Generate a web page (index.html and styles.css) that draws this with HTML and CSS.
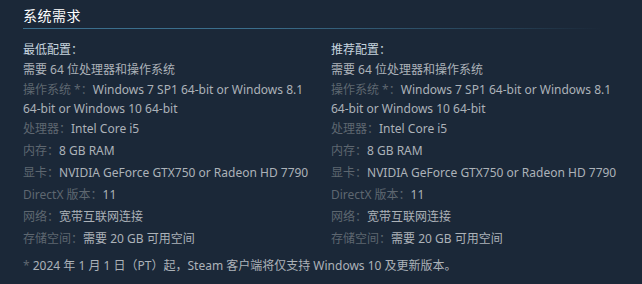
FILE: index.html
```html
<!DOCTYPE html>
<html lang="zh-CN">
<head>
<meta charset="utf-8">
<link rel="stylesheet" href="styles.css">
</head>
<body>
<div class="sysreq">
  <h2 class="title">系统需求</h2>
  <div class="cols">
    <div class="col">
      <ul class="list">
        <li class="head">最低配置：</li>
        <li class="tight">需要 64 位处理器和操作系统</li>
        <li class="tight"><span class="lbl">操作系统 *：</span>Windows 7 SP1 64-bit or Windows 8.1 64-bit or Windows 10 64-bit</li>
        <li><span class="lbl">处理器：</span>Intel Core i5</li>
        <li><span class="lbl">内存：</span>8 GB RAM</li>
        <li><span class="lbl">显卡：</span>NVIDIA GeForce GTX750 or Radeon HD 7790</li>
        <li><span class="lbl">DirectX 版本：</span>11</li>
        <li><span class="lbl">网络：</span>宽带互联网连接</li>
        <li><span class="lbl">存储空间：</span>需要 20 GB 可用空间</li>
      </ul>
    </div>
    <div class="col">
      <ul class="list">
        <li class="head">推荐配置：</li>
        <li class="tight">需要 64 位处理器和操作系统</li>
        <li class="tight"><span class="lbl">操作系统 *：</span>Windows 7 SP1 64-bit or Windows 8.1 64-bit or Windows 10 64-bit</li>
        <li><span class="lbl">处理器：</span>Intel Core i5</li>
        <li><span class="lbl">内存：</span>8 GB RAM</li>
        <li><span class="lbl">显卡：</span>NVIDIA GeForce GTX750 or Radeon HD 7790</li>
        <li><span class="lbl">DirectX 版本：</span>11</li>
        <li><span class="lbl">网络：</span>宽带互联网连接</li>
        <li><span class="lbl">存储空间：</span>需要 20 GB 可用空间</li>
      </ul>
    </div>
  </div>
  <p class="note"><span class="ast">*</span> 2024 年 1 月 1 日（PT）起，Steam 客户端将仅支持 Windows 10 及更新版本。</p>
</div>
</body>
</html>
```
FILE: styles.css
```css
html, body {
  margin: 0;
  padding: 0;
  background: #1b2838;
  height: 100%;
}
body {
  font-family: "Noto Sans", "Noto Sans CJK SC", sans-serif;
  font-size: 12px;
  color: #acb2b8;
}
.sysreq {
  padding: 6px 0 0 23px;
}
.title {
  margin: 0 40px 0 0;
  font-size: 14px;
  font-weight: normal;
  color: #ffffff;
  letter-spacing: 0.5px;
  line-height: 20px;
  padding-bottom: 3px;
  background: linear-gradient(to right, #3b6e8c 0%, #3b6e8c 40%, rgba(59,110,140,0.3) 85%, rgba(59,110,140,0) 100%) no-repeat left bottom / 100% 1px;
}
.cols {
  display: flex;
  gap: 12px;
  margin-top: 11px;
}
.col {
  width: 296px;
}
.list {
  list-style: none;
  margin: 0;
  padding: 0;
}
.list li {
  line-height: 19px;
  margin-bottom: 3px;
}
.list li.head {
  color: #c6d4df;
  margin-bottom: 1px;
}
.list li.tight {
  margin-bottom: 1px;
}
.lbl {
  color: #5e6770;
}
.note {
  margin: 5px 0 0;
  line-height: 19px;
}
.ast {
  color: #5e6770;
}
```
